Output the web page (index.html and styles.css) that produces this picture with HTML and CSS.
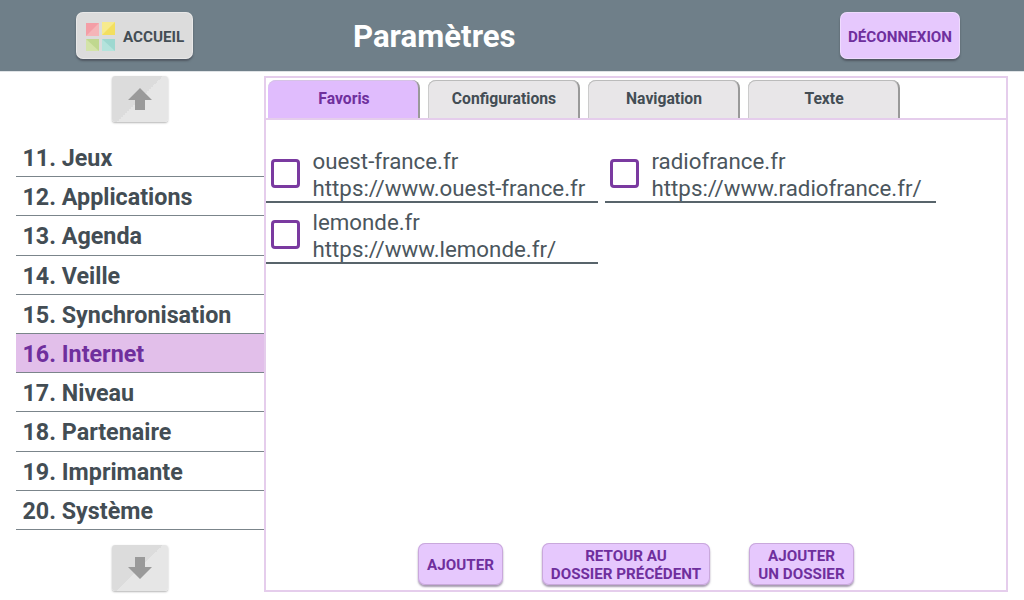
FILE: index.html
```html
<!DOCTYPE html>
<html lang="fr">
<head>
<meta charset="utf-8">
<title>Paramètres</title>
<link rel="stylesheet" href="styles.css">
</head>
<body>
<header class="topbar">
  <div class="topbar-left">
    <button class="btn btn-home">
      <svg class="home-icon" width="30" height="30" viewBox="0 0 30 30">
        <rect x="0" y="1" width="13" height="13" fill="#f5b5b8"/><path d="M0 14V1h13z" fill="#f49ea6"/>
        <rect x="16" y="0" width="13" height="13" fill="#f6ea8e"/><path d="M29 0v13H16z" fill="#f3df60"/>
        <rect x="0" y="17" width="13" height="12" fill="#d3e3a8"/><path d="M0 17h13v12z" fill="#c0d88f"/>
        <rect x="16" y="17" width="13" height="12" fill="#b4e3dc"/><path d="M29 17v12L16 17z" fill="#9ed8d0"/>
      </svg>
      <span>ACCUEIL</span>
    </button>
  </div>
  <h1 class="title">Paramètres</h1>
  <div class="topbar-right">
    <button class="btn btn-purple btn-logout">DÉCONNEXION</button>
  </div>
</header>
<main class="main">
  <aside class="sidebar">
    <button class="arrow arrow-up">
      <svg width="24" height="24" viewBox="0 0 24 24"><path d="M12 1 24 13h-7v10H7V13H0z" fill="#9a9a9a"/></svg>
    </button>
    <ul class="menu">
      <li>11. Jeux</li>
      <li>12. Applications</li>
      <li>13. Agenda</li>
      <li>14. Veille</li>
      <li>15. Synchronisation</li>
      <li class="active">16. Internet</li>
      <li>17. Niveau</li>
      <li>18. Partenaire</li>
      <li>19. Imprimante</li>
      <li>20. Système</li>
    </ul>
    <button class="arrow arrow-down">
      <svg width="24" height="24" viewBox="0 0 24 24"><path d="M12 23 24 11h-7V1H7v10H0z" fill="#9a9a9a"/></svg>
    </button>
  </aside>
  <section class="panel">
    <nav class="tabs">
      <div class="tab tab-active">Favoris</div>
      <div class="tab">Configurations</div>
      <div class="tab">Navigation</div>
      <div class="tab">Texte</div>
    </nav>
    <div class="favs">
      <div class="fav">
        <span class="check"></span>
        <div class="fav-text"><div>ouest-france.fr</div><div>https://www.ouest-france.fr</div></div>
      </div>
      <div class="fav">
        <span class="check"></span>
        <div class="fav-text"><div>radiofrance.fr</div><div>https://www.radiofrance.fr/</div></div>
      </div>
      <div class="fav">
        <span class="check"></span>
        <div class="fav-text"><div>lemonde.fr</div><div>https://www.lemonde.fr/</div></div>
      </div>
    </div>
    <div class="actions">
      <button class="btn btn-purple btn-add">AJOUTER</button>
      <button class="btn btn-purple btn-back">RETOUR AU<br>DOSSIER PRÉCÉDENT</button>
      <button class="btn btn-purple btn-folder">AJOUTER<br>UN DOSSIER</button>
    </div>
  </section>
</main>
</body>
</html>
```
FILE: styles.css
```css
* { box-sizing: border-box; }
html, body { margin: 0; height: 100%; }
body {
  width: 1024px;
  height: 600px;
  overflow: hidden;
  background: #fff;
  font-family: Roboto, "Liberation Sans", sans-serif;
  color: #434d54;
  display: flex;
  flex-direction: column;
}
.topbar {
  height: 72px;
  flex: none;
  background: #6f7f89;
  display: flex;
  align-items: center;
  border-bottom: 1px solid #dfe3e6;
}
.topbar-left { width: 353px; padding-left: 76px; }
.title {
  margin: 3px 0 0;
  width: 487px;
  color: #fff;
  font-size: 31.2px;
  font-weight: 700;
  line-height: 1;
}
.topbar-right { flex: 1; }
.btn {
  font-family: inherit;
  font-weight: 700;
  border: 0;
  padding: 0;
  cursor: pointer;
  border-radius: 7px;
  box-shadow: inset 0 0 0 1px rgba(255,255,255,.35), 0 2px 2px rgba(50,50,60,.5);
}
.btn-home {
  width: 117px;
  height: 47px;
  background: #dcdcdc;
  color: #434d54;
  font-size: 15.2px;
  display: flex;
  align-items: center;
  gap: 7px;
  padding: 2px 0 0 10px;
}
.btn-purple {
  background: #e6c8fd;
  color: #6f2f9d;
  font-size: 15.2px;
  line-height: 18px;
  padding-top: 2px;
}
.btn-logout { width: 120px; height: 47px; }
.main {
  flex: 1;
  display: flex;
  padding: 4px 16px 8px;
  min-height: 0;
}
.sidebar {
  width: 248px;
  flex: none;
  display: flex;
  flex-direction: column;
  align-items: center;
}
.arrow {
  width: 56px;
  height: 46px;
  flex: none;
  border: 0;
  padding: 0;
  border-radius: 3px;
  background: linear-gradient(135deg, #dcdcdc 50%, #e6e6e6 50%);
  box-shadow: 0 1px 2px rgba(90,90,90,.45);
  display: flex;
  align-items: center;
  justify-content: center;
}
.menu {
  list-style: none;
  margin: 16px 0 15px;
  padding: 0;
  width: 100%;
}
.menu li {
  height: 39.2px;
  line-height: 40px;
  padding-left: 6.5px;
  font-size: 23.3px;
  font-weight: 700;
  border-bottom: 1px solid #7b858b;
}
.menu li.active { background: #e2bfea; color: #6f2f9d; }
.panel {
  width: 744px;
  flex: none;
  border: 2px solid #e5cdec;
  display: flex;
  flex-direction: column;
}
.tabs {
  height: 42px;
  flex: none;
  display: flex;
  gap: 8px;
  padding: 2px 0 0 2px;
  border-bottom: 2px solid #e5cdec;
}
.tab {
  width: 152px;
  height: 38px;
  padding-left: 2px;
  background: #e8e6e8;
  border-radius: 8px 8px 0 0;
  border-right: 2px solid #999;
  box-shadow: inset 0 1px 0 #bbb, inset 1px 0 0 #ccc;
  font-size: 15.7px;
  font-weight: 700;
  text-align: center;
  line-height: 38px;
}
.tab-active {
  background: #e0bcfd;
  color: #6f2f9d;
  box-shadow: inset 0 1px 0 #d6c3e6;
}
.favs {
  flex: 1;
  display: grid;
  grid-template-columns: 332px 331px;
  grid-auto-rows: 61px;
  column-gap: 7px;
  align-content: start;
  padding-top: 22px;
}
.fav {
  display: flex;
  align-items: center;
  border-bottom: 2px solid #58646b;
  height: 61px;
  padding-left: 4.5px;
}
.check {
  width: 29px;
  height: 29px;
  flex: none;
  border: 3px solid #7a3aa0;
  border-radius: 4px;
  margin: 3px 13px 0 0;
}
.fav-text {
  font-size: 22.3px;
  line-height: 27px;
  color: #4b565d;
  white-space: nowrap;
  margin-top: 6px;
}
.actions {
  flex: none;
  display: flex;
  justify-content: flex-start;
  padding: 0 0 5px 152px;
  height: 47px;
}
.btn-add { width: 85px; height: 42px; }
.btn-back { width: 168px; height: 42px; margin-left: 39px; }
.btn-folder { width: 105px; height: 42px; margin-left: 39px; }
.actions .btn { box-shadow: inset 0 0 0 1px #c9a8dc, 0 2px 2px rgba(90,70,110,.55); }
```
